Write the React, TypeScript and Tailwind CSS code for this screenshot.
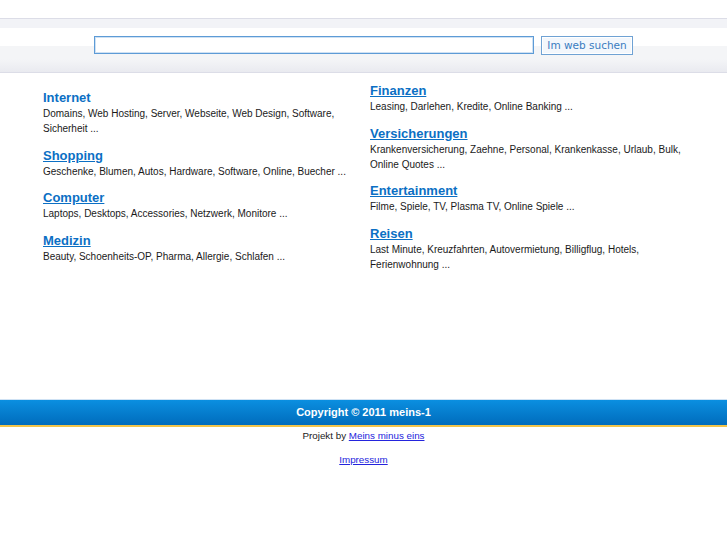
const LEFT = [
  {
    title: 'Internet',
    text: 'Domains, Web Hosting, Server, Webseite, Web Design, Software, Sicherheit ...',
    plain: true,
  },
  { title: 'Shopping', text: 'Geschenke, Blumen, Autos, Hardware, Software, Online, Buecher ...' },
  { title: 'Computer', text: 'Laptops, Desktops, Accessories, Netzwerk, Monitore ...' },
  { title: 'Medizin', text: 'Beauty, Schoenheits-OP, Pharma, Allergie, Schlafen ...' },
]

const RIGHT = [
  { title: 'Finanzen', text: 'Leasing, Darlehen, Kredite, Online Banking ...' },
  {
    title: 'Versicherungen',
    text: 'Krankenversicherung, Zaehne, Personal, Krankenkasse, Urlaub, Bulk, Online Quotes ...',
  },
  { title: 'Entertainment', text: 'Filme, Spiele, TV, Plasma TV, Online Spiele ...' },
  {
    title: 'Reisen',
    text: 'Last Minute, Kreuzfahrten, Autovermietung, Billigflug, Hotels, Ferienwohnung ...',
  },
]

type Item = { title: string; text: string; plain?: boolean }

function Block({ item }: { item: Item }) {
  return (
    <div className="mb-[11.6px]">
      <a
        href="#"
        className={
          'block w-fit text-[13px] leading-[16px] font-bold text-[#0b6fc4] ' +
          (item.plain ? 'no-underline' : 'underline')
        }
      >
        {item.title}
      </a>
      <p className="text-[10px] leading-[15px] text-[#1a1a1a]">{item.text}</p>
    </div>
  )
}

export default function App() {
  return (
    <div className="w-full min-h-[545px] bg-white font-['Liberation_Sans',Arial,sans-serif]">
      <div className="h-[18px]" />
      <header className="h-[55px] flex items-center justify-center gap-[7px] border-y border-[#dcdde7] bg-[linear-gradient(to_bottom,#f2f3f7_0px,#f2f3f7_9px,#ffffff_9px,#ffffff_27px,#f4f5f7_27px,#f4f5f7_40px,#e9eaf0_100%)]">
        <input
          type="text"
          className="w-[440px] h-[18px] -mt-[1px] border border-[#5d9bd6] bg-white outline-none shadow-[inset_0_0_0_1px_#cfe1f3]"
        />
        <button className="h-[19px] -mt-[1px] px-[5px] border border-[#6fa2d4] bg-[#f3f7fc] text-[#3a7cc0] text-[10.5px] leading-none font-['DejaVu_Sans',Verdana,sans-serif] shadow-[inset_0_0_0_1px_#ffffff]">
          Im web suchen
        </button>
      </header>

      <main className="h-[326px] flex pl-[43px]">
        <div className="w-[327px] pt-[17px]">
          {LEFT.map((i) => (
            <Block key={i.title} item={i} />
          ))}
        </div>
        <div className="w-[318px] pt-[10px]">
          {RIGHT.map((i) => (
            <Block key={i.title} item={i} />
          ))}
        </div>
      </main>

      <footer className="text-center">
        <div className="h-[28px] flex items-center justify-center border-t border-[#cfe2f4] border-b-2 border-b-[#f2c44a] bg-[linear-gradient(to_bottom,#0b8fe0,#006cbc)] text-white text-[11px] font-bold">
          Copyright © 2011 meins-1
        </div>
        <p className="mt-[2px] text-[9.8px] leading-[14px] text-[#1a1a1a]">
          Projekt by{' '}
          <a href="#" className="underline text-[#2424dd]">
            Meins minus eins
          </a>
        </p>
        <p className="mt-[10px] text-[9.8px] leading-[14px]">
          <a href="#" className="underline text-[#2424dd]">
            Impressum
          </a>
        </p>
      </footer>
    </div>
  )
}
